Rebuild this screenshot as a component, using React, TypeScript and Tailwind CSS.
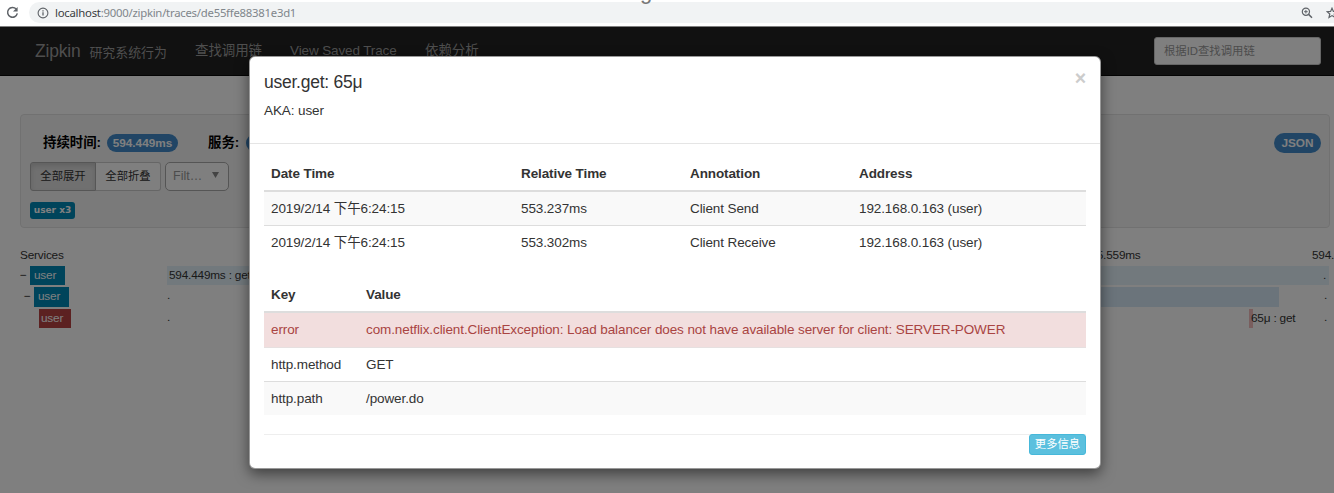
import type { ReactNode } from 'react';

const annotations = [
  ['2019/2/14 下午6:24:15', '553.237ms', 'Client Send', '192.168.0.163 (user)'],
  ['2019/2/14 下午6:24:15', '553.302ms', 'Client Receive', '192.168.0.163 (user)'],
];

const tags = [
  { key: 'error', value: 'com.netflix.client.ClientException: Load balancer does not have available server for client: SERVER-POWER', style: 'bg-[#f2dede] text-[#a94442] border-[#ddd]' },
  { key: 'http.method', value: 'GET', style: 'border-[#e6e0e0]' },
  { key: 'http.path', value: '/power.do', style: 'bg-[#f9f9f9] border-[#ddd]' },
];

function BrowserBar() {
  return (
    <header className="relative flex h-[26px] shrink-0 items-start bg-white pt-[2px]">
      <svg className="ml-[6px] mt-[4px] h-[13px] w-[13px] shrink-0" viewBox="0 0 13 13" fill="none">
        <path d="M10.2 3.1A4.9 4.9 0 1 0 11.3 7.4" stroke="#5f6368" strokeWidth="1.5" />
        <path d="M11.6 1v4.6H7z" fill="#5f6368" />
      </svg>
      <div className="ml-[10px] flex h-[21px] flex-1 items-center rounded-l-full bg-[#f1f3f4]">
        <svg className="ml-[8px] h-[12px] w-[12px] shrink-0" viewBox="0 0 12 12" fill="none" stroke="#5f6368">
          <circle cx="6" cy="6" r="4.9" strokeWidth="1.1" />
          <path d="M6 5.3v3.3M6 3.2v1.2" strokeWidth="1.3" />
        </svg>
        <span className="ml-[6px] font-['Noto_Sans',sans-serif] text-[11.35px] leading-[20px] tracking-[-0.25px] whitespace-nowrap text-[#80868b]">
          <span className="text-[#3c4043]">localhost</span>:9000/zipkin/traces/de55ffe88381e3d1
        </span>
        <svg className="ml-auto h-[12px] w-[12px] shrink-0" viewBox="0 0 12 12" fill="none" stroke="#5f6368">
          <circle cx="4.9" cy="4.7" r="3.6" strokeWidth="1.2" />
          <path d="M7.6 7.4l3.4 3.4" strokeWidth="1.5" />
          <path d="M3.1 4.7h3.6M4.9 2.9v3.6" strokeWidth="1" />
        </svg>
        <svg className="ml-[12.5px] h-[12px] w-[8.5px] shrink-0" viewBox="0 0 8.5 12" fill="none">
          <path d="M6 1.2l1.4 3.2 3.5.3-2.7 2.3.8 3.4-3-1.8-3 1.8.8-3.4L1.1 4.7l3.5-.3z" stroke="#5f6368" strokeWidth="1.2" />
        </svg>
      </div>
      <span className="absolute top-[-15px] left-[640px] h-[18px] font-['Liberation_Sans',sans-serif] text-[22px] leading-[14px] text-[#777]">g</span>
    </header>
  );
}

function NavBar() {
  return (
    <nav className="flex h-[50px] items-start border-t border-b border-t-white border-b-[#080808] bg-[#222] pl-[35px] text-[13.5px] leading-[20px] tracking-[-0.12px] whitespace-nowrap text-[#9d9d9d]">
      <div className="mt-[14px] flex w-[160px] items-baseline">
        <span className="text-[17.5px] tracking-[-0.2px]">Zipkin</span>
        <span className="ml-[9px] text-[12.9px] tracking-normal">研究系统行为</span>
      </div>
      <span className="mt-[14px] w-[95px]">查找调用链</span>
      <span className="mt-[14px] w-[135px]">View Saved Trace</span>
      <span className="mt-[14px]">依赖分析</span>
      <div className="mt-[10px] mr-[13px] ml-auto h-[28px] w-[167px] rounded-[3px] border border-[#ccc] bg-white pl-[9px] text-[11.35px] leading-[27px] tracking-normal text-[#999]">
        根据ID查找调用链
      </div>
    </nav>
  );
}

function Pill({ children, className }: { children: ReactNode; className: string }) {
  return <span className={`rounded-full bg-[#428bca] text-center text-[11.8px] font-bold text-white ${className}`}>{children}</span>;
}

function Summary() {
  return (
    <section className="mt-[38px] mr-[4px] ml-[20px] h-[114px] rounded-[4px] border border-[#e3e3e3] bg-[#f5f5f5]">
      <div className="flex h-[47px] items-start pl-[22px] text-[13.4px] font-bold whitespace-nowrap text-black">
        <span className="mt-[18px] w-[64px] leading-[20px]">持续时间:</span>
        <Pill className="mt-[19px] h-[18px] w-[71px] leading-[18px]">594.449ms</Pill>
        <span className="mt-[18px] ml-[30px] w-[38px] leading-[20px]">服务:</span>
        <Pill className="mt-[19px] h-[18px] w-[22px] leading-[18px]">1</Pill>
        <Pill className="mt-[18px] mr-[8px] ml-auto h-[20px] w-[47px] leading-[20px]">JSON</Pill>
      </div>
      <div className="flex pl-[9px] text-[11.35px] leading-[26px] text-[#333]">
        <div className="h-[29px] w-[66px] rounded-l-[3px] border border-[#adadad] bg-[#e0e0e0] text-center shadow-[inset_0_3px_5px_rgba(0,0,0,0.125)]">全部展开</div>
        <div className="h-[29px] w-[65px] rounded-r-[3px] border border-l-0 border-[#ccc] bg-white text-center">全部折叠</div>
        <div className="ml-[4px] flex h-[29px] w-[64px] rounded-[5px] border border-[#aaa] bg-white pl-[7px] text-[12.5px] text-[#999]">
          <span>Filt…</span>
          <svg className="mt-[9px] ml-auto mr-[9px] h-[6px] w-[7px]" viewBox="0 0 7 6"><path d="M0 0h7L3.5 6z" fill="#888" /></svg>
        </div>
      </div>
      <div className="mt-[11px] ml-[9px] h-[17px] w-[45px] rounded-[3px] bg-[#0088b7] text-center font-['DejaVu_Sans',sans-serif] text-[9px] leading-[16px] font-bold text-white">user x3</div>
    </section>
  );
}

function ServiceTag({ className }: { className: string }) {
  return <span className={`h-[19.5px] leading-[19px] text-white ${className}`}>user</span>;
}

function Timeline() {
  return (
    <section className="mt-[18px] ml-[20px] flex flex-col overflow-hidden text-[11.8px] leading-[19px] tracking-[-0.2px] whitespace-nowrap text-[#333]">
      <div className="flex h-[19.7px]">
        <span className="w-[1064px] shrink-0">Services</span>
        <span className="w-[228px] shrink-0">475.559ms</span>
        <span className="shrink-0">594.449ms</span>
      </div>
      <div className="flex h-[21.6px]">
        <span className="w-[10px] leading-[18px]">−</span>
        <ServiceTag className="w-[35px] bg-[#0088b7] pl-[4px]" />
        <div className="ml-[102px] flex h-[19.5px] w-[1162px] justify-between bg-[#e5f3fb] pr-[3px] pl-[2px]"><span>594.449ms : get</span><span>.</span></div>
      </div>
      <div className="flex h-[21.6px]">
        <span className="w-[14px] pl-[4px] leading-[18px]">−</span>
        <ServiceTag className="w-[35px] bg-[#0088b7] pl-[4px]" />
        <span className="ml-[98px] w-[112px] leading-[17px]">.</span>
        <div className="h-[19.5px] w-[1000px] bg-[#d7e8f6]" />
        <span className="ml-[45px] leading-[17px]">.</span>
      </div>
      <div className="flex h-[20px]">
        <ServiceTag className="ml-[19px] w-[32px] bg-[#b94343] pl-[2px]" />
        <span className="ml-[96px] w-[3px] leading-[17px]">.</span>
        <div className="ml-[1079px] h-[19.5px] w-[4px] bg-[#f2bcbc]" />
        <span className="-ml-[2px] w-[73px]">65μ : get</span>
        <span className="leading-[17px]">.</span>
      </div>
    </section>
  );
}

function SpanModal() {
  return (
    <div role="dialog" className="absolute top-[30px] left-[249px] flex h-[413px] w-[852px] flex-col rounded-[6px] border border-black/40 bg-white text-[13.5px] leading-[20px] tracking-[-0.105px] text-[#333] shadow-[0_5px_14px_rgba(0,0,0,0.5)]">
      <div className="flex h-[87px] justify-between border-b border-[#e5e5e5] pr-[14px] pl-[14px]">
        <div>
          <h4 className="mt-[14px] text-[17.5px] leading-[22px] tracking-[-0.25px]">user.get: 65μ</h4>
          <div className="mt-[8px]">AKA: user</div>
        </div>
        <span className="mt-[11px] text-[19.5px] leading-[20px] font-bold text-[#ccc]">×</span>
      </div>
      <div className="mx-[14px] mt-[13px]">
        <div className="grid h-[35px] grid-cols-[250px_169px_169px_1fr] border-b-2 border-[#ddd] pl-[7px] leading-[34px] font-bold">
          <span>Date Time</span><span>Relative Time</span><span>Annotation</span><span>Address</span>
        </div>
        {annotations.map((row, i) => (
          <div key={row[1]} className={`grid grid-cols-[250px_169px_169px_1fr] pl-[7px] ${i === 0 ? 'h-[33px] bg-[#f9f9f9] leading-[34px]' : 'h-[34px] border-t border-[#ddd] bg-white leading-[34px]'}`}>
            {row.map((cell) => <span key={cell}>{cell}</span>)}
          </div>
        ))}
      </div>
      <div className="mx-[14px] mt-[19px]">
        <div className="grid h-[35px] grid-cols-[95px_1fr] border-b-2 border-[#ddd] pl-[7px] leading-[34px] font-bold">
          <span>Key</span><span>Value</span>
        </div>
        {tags.map((tag, i) => (
          <div key={tag.key} className={`grid h-[34px] grid-cols-[95px_1fr] pl-[7px] whitespace-nowrap ${tag.style} ${i === 0 ? 'leading-[34px]' : 'border-t leading-[33px]'}`}>
            <span>{tag.key}</span><span>{tag.value}</span>
          </div>
        ))}
      </div>
      <div className="mx-[14px] mt-[19px] flex justify-end border-t border-[#eee]">
        <button className="-mt-[1px] h-[21px] w-[57px] rounded-[3px] border border-[#46b8da] bg-[#5bc0de] text-[11.35px] leading-[19px] tracking-normal text-white">更多信息</button>
      </div>
    </div>
  );
}

export default function App() {
  return (
    <div className="flex h-[493px] w-[1334px] flex-col overflow-hidden bg-white font-['Liberation_Sans','Noto_Sans_CJK_SC',sans-serif]">
      <BrowserBar />
      <main className="relative flex-1 overflow-hidden bg-white">
        <NavBar />
        <Summary />
        <Timeline />
        <div className="absolute inset-0 bg-black/50" />
        <SpanModal />
      </main>
    </div>
  );
}
